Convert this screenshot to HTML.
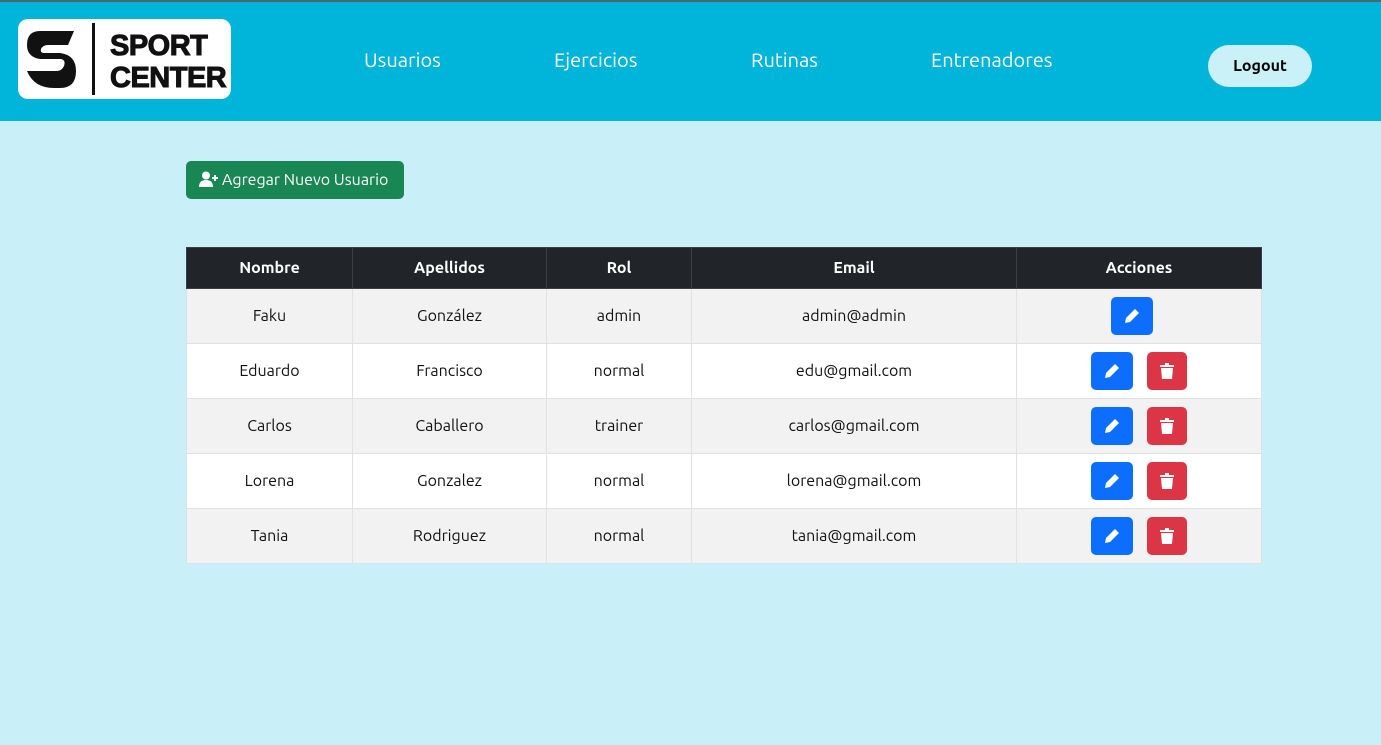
<!DOCTYPE html><html><head><style>
*{box-sizing:border-box;margin:0;padding:0}
body{width:1381px;height:745px;background:#c9f0f8;font-family:"Ubuntu","Liberation Sans",sans-serif;position:relative;overflow:hidden}
.hdr{position:absolute;left:0;top:0;width:1381px;height:121px;background:#00b5d9;border-top:2px solid #4a6670}
.logo{position:absolute;left:18px;top:17px;width:213px;height:80px;background:#fff;border-radius:10px}
.nav a{position:absolute;top:46px;color:#fff;font-size:20px;text-decoration:none}
.logout{position:absolute;left:1208px;top:43px;width:104px;height:42px;border-radius:21px;background:#caf0f8;font-weight:bold;font-size:16px;text-align:center;line-height:42px;color:#000}
.add{position:absolute;left:186px;top:161px;width:218px;height:38px;background:#198754;border-radius:5px;color:#fff;font-size:16px;line-height:38px;padding-left:36px}
table{position:absolute;left:186px;top:247px;width:1076px;border-collapse:collapse;font-size:16px}
th{background:#212529;color:#fff;height:41px;border:1px solid #3a3f44;font-weight:bold}
td{height:55px;text-align:center;border:1px solid #dee2e6;color:#111}
tr:nth-child(even) td{background:#f2f2f2}
tr:nth-child(odd) td{background:#fff}
.b{display:inline-block;width:42px;height:38px;border-radius:5px;vertical-align:middle;position:relative}
.e{background:#0d6efd}.d{background:#dc3545;width:40px;margin-left:14px}
.b svg{position:absolute;left:50%;top:50%;transform:translate(-50%,-50%)}
</style></head><body>
<div class="hdr">
<div class="logo">
<svg width="213" height="80" viewBox="0 0 213 80">
<path d="M56 12H22Q9 12 9 26Q9 38 22 40H43Q48 41 46 47Q44 52 38 52H9Q16 69 36 69H42Q58 69 58 52Q58 36 42 34H25Q22 33 23 30Q25 26 30 26H50Z" fill="#111"/>
<rect x="74" y="4" width="3" height="72" fill="#111"/>
<text x="92" y="36" font-family="Liberation Sans" font-weight="bold" font-size="29" fill="#111" stroke="#111" stroke-width="1" letter-spacing="-0.5">SPORT</text>
<text x="92" y="68" font-family="Liberation Sans" font-weight="bold" font-size="29" fill="#111" stroke="#111" stroke-width="1" letter-spacing="-0.5">CENTER</text>
</svg></div>
<div class="nav"><a style="left:364px">Usuarios</a><a style="left:554px">Ejercicios</a><a style="left:751px">Rutinas</a><a style="left:931px">Entrenadores</a></div>
<div class="logout">Logout</div>
</div>
<div class="add"><svg style="position:absolute;left:13px;top:10px" width="20" height="17" viewBox="0 0 20 17"><circle cx="7" cy="4.5" r="4" fill="#fff"/><path d="M0 16Q0 9 7 9Q14 9 14 16Z" fill="#fff"/><path d="M16 4v6M13 7h6" stroke="#fff" stroke-width="2"/></svg>Agregar Nuevo Usuario</div>
<table>
<tr><th style="width:166px">Nombre</th><th style="width:194px">Apellidos</th><th style="width:145px">Rol</th><th style="width:325px">Email</th><th>Acciones</th></tr>
<tr><td>Faku</td><td>González</td><td>admin</td><td>admin@admin</td><td><span class="b e" style="margin-left:-14px"><svg width="16" height="16" viewBox="0 0 16 16"><path d="M11 1l4 4-9 9-5 1 1-5z" fill="#fff"/></svg></span></td></tr>
<tr><td>Eduardo</td><td>Francisco</td><td>normal</td><td>edu@gmail.com</td><td><span class="b e"><svg width="16" height="16" viewBox="0 0 16 16"><path d="M11 1l4 4-9 9-5 1 1-5z" fill="#fff"/></svg></span><span class="b d"><svg width="14" height="16" viewBox="0 0 14 16"><path d="M0 2h14v2H0zM5 0h4v2H5zM1 5h12l-1 11H2z" fill="#fff"/></svg></span></td></tr>
<tr><td>Carlos</td><td>Caballero</td><td>trainer</td><td>carlos@gmail.com</td><td><span class="b e"><svg width="16" height="16" viewBox="0 0 16 16"><path d="M11 1l4 4-9 9-5 1 1-5z" fill="#fff"/></svg></span><span class="b d"><svg width="14" height="16" viewBox="0 0 14 16"><path d="M0 2h14v2H0zM5 0h4v2H5zM1 5h12l-1 11H2z" fill="#fff"/></svg></span></td></tr>
<tr><td>Lorena</td><td>Gonzalez</td><td>normal</td><td>lorena@gmail.com</td><td><span class="b e"><svg width="16" height="16" viewBox="0 0 16 16"><path d="M11 1l4 4-9 9-5 1 1-5z" fill="#fff"/></svg></span><span class="b d"><svg width="14" height="16" viewBox="0 0 14 16"><path d="M0 2h14v2H0zM5 0h4v2H5zM1 5h12l-1 11H2z" fill="#fff"/></svg></span></td></tr>
<tr><td>Tania</td><td>Rodriguez</td><td>normal</td><td>tania@gmail.com</td><td><span class="b e"><svg width="16" height="16" viewBox="0 0 16 16"><path d="M11 1l4 4-9 9-5 1 1-5z" fill="#fff"/></svg></span><span class="b d"><svg width="14" height="16" viewBox="0 0 14 16"><path d="M0 2h14v2H0zM5 0h4v2H5zM1 5h12l-1 11H2z" fill="#fff"/></svg></span></td></tr>
</table>
</body></html>
